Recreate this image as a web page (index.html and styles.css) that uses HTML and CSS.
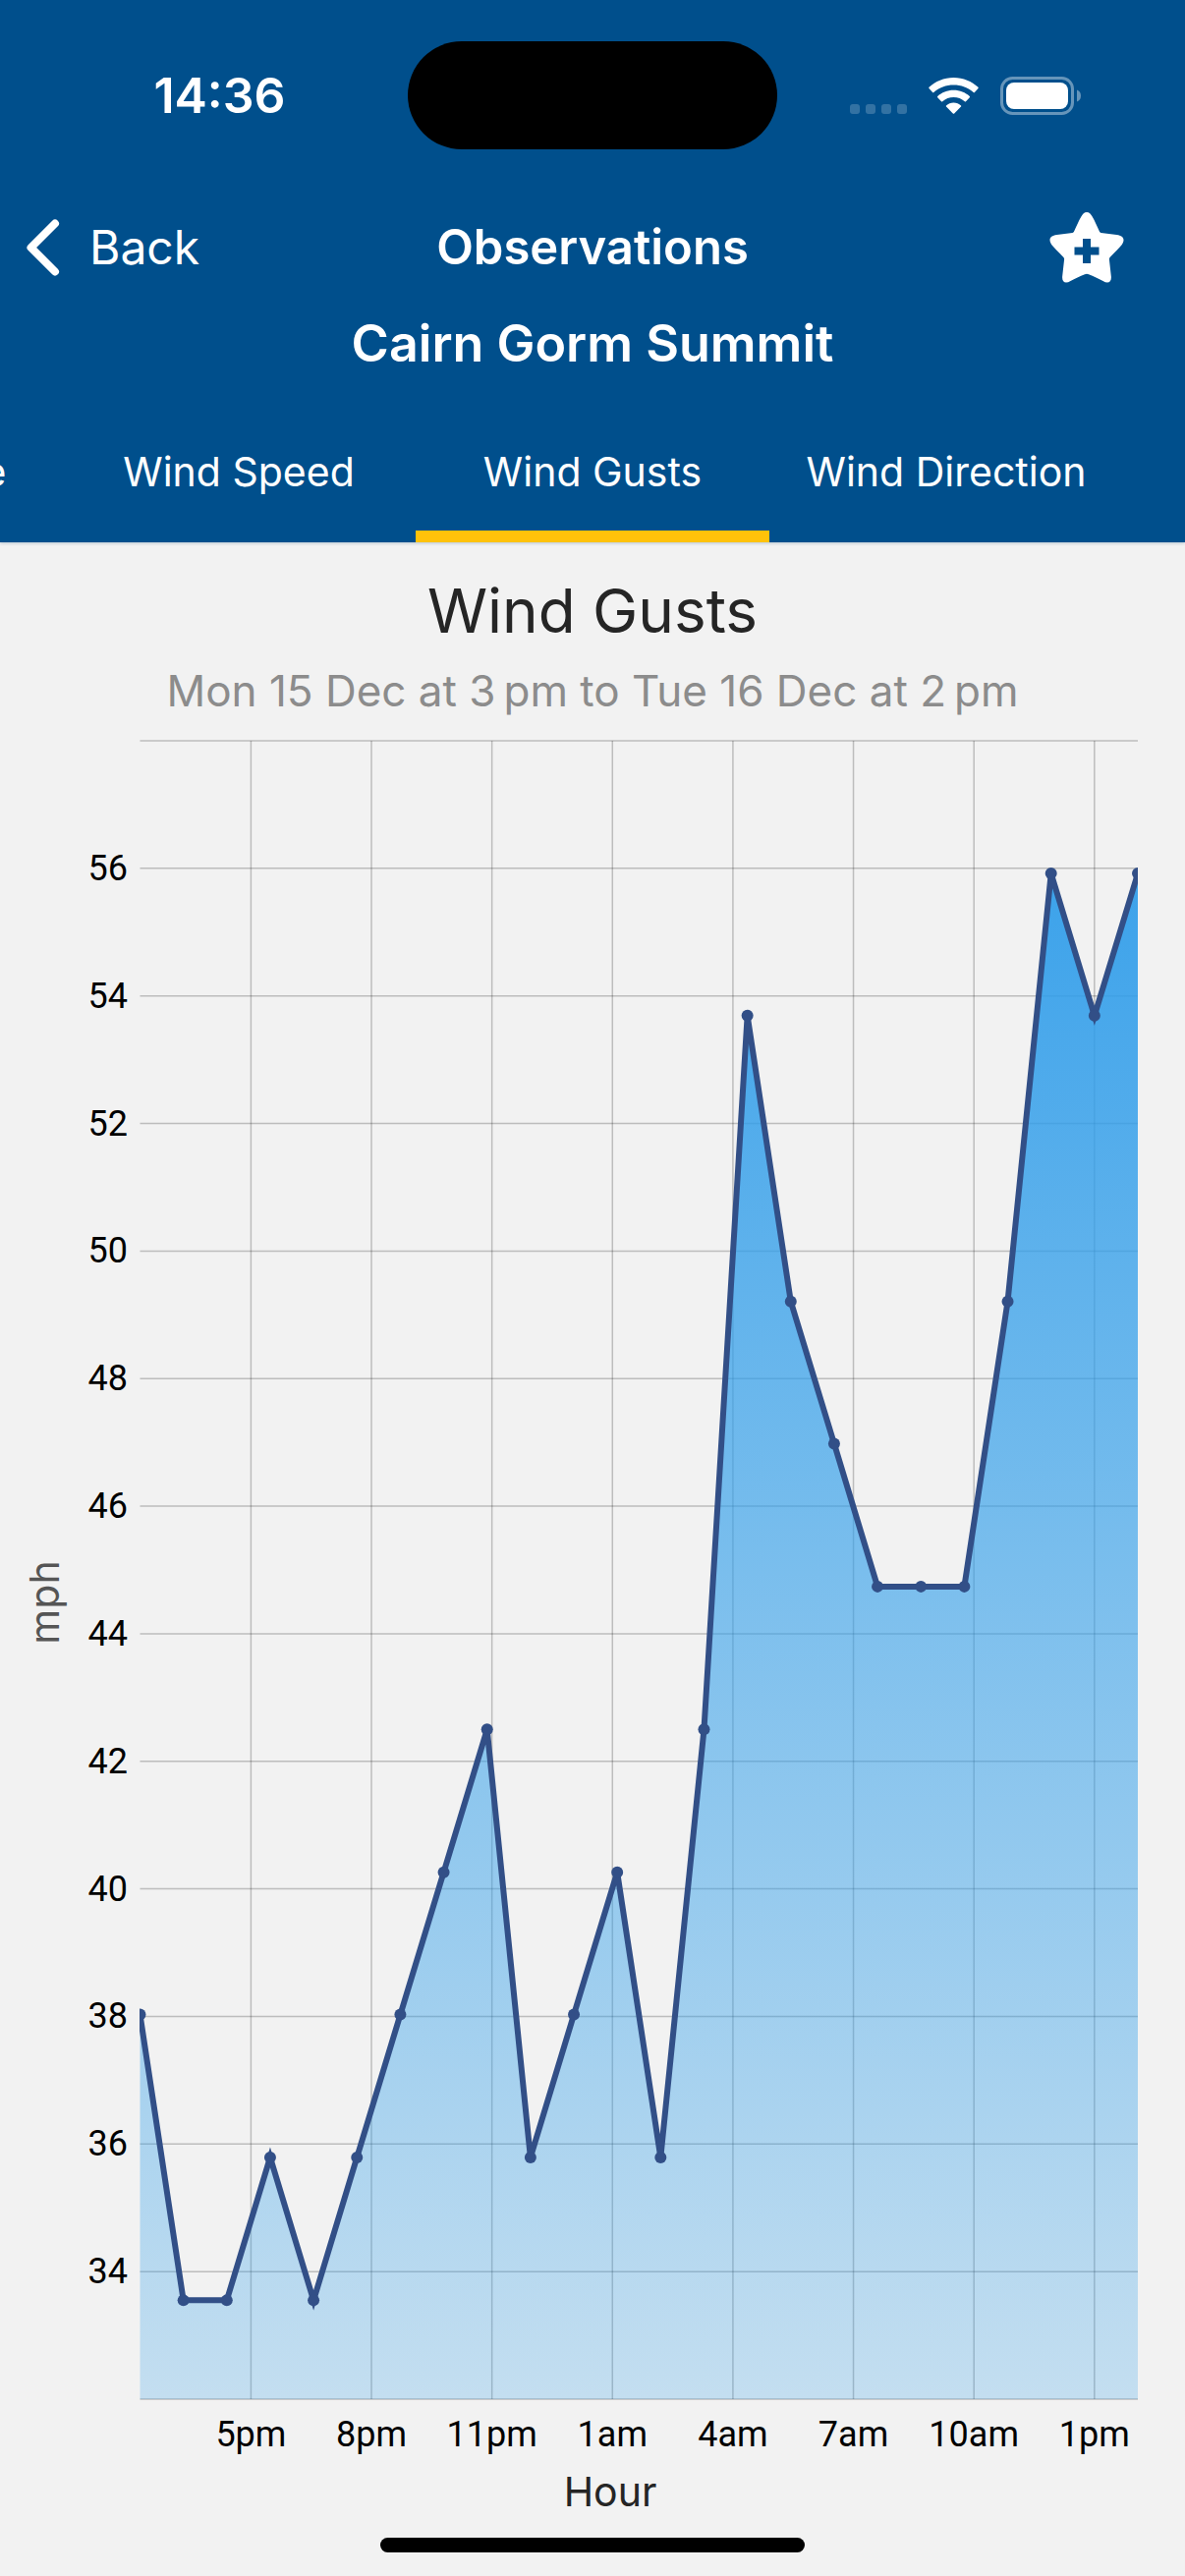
FILE: index.html
```html
<!DOCTYPE html>
<html lang="en">
<head>
<meta charset="utf-8">
<meta name="viewport" content="width=device-width, initial-scale=1">
<title>Observations – Cairn Gorm Summit</title>
<link rel="stylesheet" href="styles.css">
</head>
<body>
<header class="header">
  <div class="status">
    <div class="time">14:36</div>
    <div class="island"></div>
    <div class="indicators">
      <svg class="signal" width="58" height="10" viewBox="0 0 58 10" aria-hidden="true">
        <rect x="0" width="10" height="10" rx="3"/><rect x="16" width="10" height="10" rx="3"/><rect x="32" width="10" height="10" rx="3"/><rect x="48" width="10" height="10" rx="3"/>
      </svg>
      <svg class="wifi" width="51" height="37" viewBox="0 0 51 37" aria-hidden="true">
        <path d="M25.500 0C35.300 0 44 3.800 50.500 9.800Q51 10.300 50.500 10.900L46.900 14.900Q46.300 15.500 45.700 15C40.200 10.200 33.200 7.600 25.500 7.600S10.800 10.200 5.300 15Q4.700 15.500 4.100 14.900L.5 10.900Q0 10.300.5 9.800C7 3.800 15.700 0 25.500 0Z"/>
        <path d="M25.500 12.800C31.900 12.800 37.600 15.200 41.800 19Q42.300 19.600 41.800 20.200L38 24.300Q37.400 24.800 36.800 24.300C33.700 21.600 29.800 20.100 25.500 20.100S17.300 21.600 14.200 24.300Q13.600 24.800 13 24.300L9.200 20.200Q8.700 19.600 9.200 19C13.400 15.200 19.100 12.800 25.500 12.800Z"/>
        <path d="M25.500 25.600C28.400 25.600 31 26.700 33 28.400Q33.500 28.900 33 29.500L26.200 36.500Q25.500 37.200 24.800 36.500L18 29.500Q17.500 28.900 18 28.400C20 26.700 22.600 25.600 25.500 25.600Z"/>
      </svg>
      <svg class="battery" width="83" height="39" viewBox="0 0 83 39" aria-hidden="true">
        <rect class="shell" x="1.500" y="1.500" width="72" height="36" rx="11"/>
        <path class="nub" d="M78 13.500Q82 15 82 19.500T78 25.500Z"/>
        <rect x="6" y="6" width="63" height="27" rx="8"/>
      </svg>
    </div>
  </div>
  <div class="nav">
    <button class="back" type="button">
      <svg width="34" height="58" viewBox="0 0 34 58" aria-hidden="true"><path d="M29 4.500L4.500 29L29 53.500"/></svg>
      Back
    </button>
    <h1 class="heading">Observations</h1>
    <button class="favourite" type="button" aria-label="Add to favourites">
      <svg width="76" height="72" viewBox="0 0 76 72" aria-hidden="true">
        <path class="star" d="M38 0C40.500 0 42.300 2 43.500 4.300C46.500 9.500 48.500 14.500 51 19.800Q51.500 20.800 52.500 21L68.500 23C73 23.600 75.500 25.500 75.500 28.200C75.500 30.300 74.500 32.200 72.500 34.500C69 38.500 65 42.500 61.500 46Q60.800 47 60.900 48L62.800 65C63.300 69.500 61.500 71.500 59 71.500Q57 71.500 54.500 70C50 67.300 45 65.200 40 63.200Q38 62.400 36 63.200C31 65.200 26 67.300 21.500 70Q19 71.500 17 71.500C14.500 71.500 12.700 69.500 13.200 65L15.100 48Q15.200 47 14.500 46C11 42.500 7 38.500 3.500 34.500C1.500 32.200.5 30.300.5 28.200C.5 25.500 3 23.600 7.500 23L23.500 21Q24.500 20.800 25 19.800C27.500 14.500 29.500 9.500 32.500 4.300C33.700 2 35.500 0 38 0Z"/>
        <path class="plus" d="M34 27h8v8.500h8.500v8H42v8.500h-8v-8.500h-8.500v-8H34z"/>
      </svg>
    </button>
  </div>
  <h2 class="station">Cairn Gorm Summit</h2>
  <nav class="tabs">
    <a class="tab" href="#temperature">Temperature</a>
    <a class="tab" href="#wind-speed">Wind Speed</a>
    <a class="tab active" href="#wind-gusts" aria-current="page">Wind Gusts</a>
    <a class="tab" href="#wind-direction">Wind Direction</a>
  </nav>
</header>
<main class="content">
  <h3 class="title">Wind Gusts</h3>
  <p class="period">Mon 15 Dec at 3&#8201;pm to Tue 16 Dec at 2&#8201;pm</p>
  <svg class="chart" id="chart" viewBox="0 0 1206 1810" role="img" aria-label="Wind gusts in mph by hour">
    <defs>
      <linearGradient id="fill" gradientUnits="userSpaceOnUse" x1="0" y1="12" x2="0" y2="1700">
        <stop class="fill-top" offset="0"/>
        <stop class="fill-bottom" offset="1"/>
      </linearGradient>
      <clipPath id="plot"><rect x="142" y="0" width="1016" height="1700"/></clipPath>
    </defs>
    <g class="grid" id="grid"></g>
    <g clip-path="url(#plot)" id="series"></g>
    <g class="ticks" id="ticks"></g>
    <text class="axis-title y-title" transform="translate(60 889) rotate(-90)">mph</text>
    <text class="axis-title" x="621" y="1809">Hour</text>
  </svg>
  <div class="home"></div>
</main>
<script src="chart.js"></script>
</body>
</html>
```
FILE: styles.css
```css
* { box-sizing: border-box; }
body {
  margin: 0;
  background: #f2f2f2;
  color: #252525;
  font-family: Inter, "Liberation Sans", sans-serif;
}
h1, h2, h3, p { margin: 0; }
button {
  border: 0;
  padding: 0;
  background: none;
  color: inherit;
  font: inherit;
  cursor: pointer;
}
svg { display: block; flex: none; }

.header {
  background: #004f8c;
  color: #fff;
  box-shadow: 0 1px 3px rgba(0, 60, 110, .25);
}
.status {
  display: grid;
  grid-template-columns: 1fr 376px 1fr;
  align-items: center;
  height: 194px;
}
.time {
  padding-left: 32px;
  text-align: center;
  font-size: 50px;
  font-weight: 600;
  line-height: 60px;
}
.island {
  height: 110px;
  border-radius: 55px;
  background: #000;
}
.indicators {
  display: flex;
  align-items: center;
  gap: 22px;
  padding-left: 74px;
}
.indicators svg { fill: #fff; }
.indicators .signal {
  margin-top: 28px;
  opacity: .2;
}
.indicators .shell {
  fill: none;
  stroke: #fff;
  stroke-width: 3;
  opacity: .4;
}
.indicators .nub { opacity: .4; }

.nav {
  display: grid;
  grid-template-columns: 1fr auto 1fr;
  align-items: center;
  height: 116px;
  line-height: 60px;
}
.back {
  display: flex;
  align-items: center;
  gap: 30px;
  padding-left: 27px;
  font-size: 48px;
}
.back path {
  fill: none;
  stroke: #fff;
  stroke-width: 8;
  stroke-linecap: round;
  stroke-linejoin: round;
}
.heading, .station {
  font-weight: 600;
  line-height: 60px;
  text-align: center;
}
.heading { font-size: 49px; }
.favourite {
  justify-self: end;
  padding-right: 62px;
}
.star { fill: #fff; }
.plus { fill: #004f8c; }
.station {
  padding-top: 10px;
  font-size: 52px;
}

.tabs {
  display: flex;
  justify-content: center;
  height: 172px;
  overflow: hidden;
}
.tabs::after {
  content: "";
  flex: 0 0 360px;
}
.tab {
  flex: 0 0 360px;
  padding-top: 74px;
  border-bottom: 12px solid transparent;
  color: #fff;
  font-size: 41px;
  line-height: 52px;
  text-align: center;
  text-decoration: none;
  white-space: nowrap;
}
.tab.active { border-color: #ffc20a; }

.content {
  display: flex;
  flex-direction: column;
  align-items: center;
}
.title {
  padding-top: 32px;
  font-size: 62px;
  font-weight: 400;
  line-height: 76px;
}
.period {
  padding-top: 16px;
  color: #8c8c8c;
  font-size: 44px;
  line-height: 54px;
}
.chart {
  width: 100%;
  margin-top: 12px;
  overflow: visible;
}
.grid line {
  stroke: #000;
  stroke-opacity: .22;
  stroke-width: 1.5px;
}
.fill-top { stop-color: #309dea; stop-opacity: 1; }
.fill-bottom { stop-color: #309fea; stop-opacity: .24; }
.area { fill: url(#fill); }
.line {
  fill: none;
  stroke: #324f87;
  stroke-width: 6;
  stroke-linejoin: miter;
}
.dot { fill: #324f87; }
.ticks {
  fill: #000;
  font-family: Roboto, "Liberation Sans", sans-serif;
  font-size: 36px;
}
.ticks .x { text-anchor: middle; }
.ticks .y { text-anchor: end; }
.axis-title {
  fill: #252525;
  font-size: 41px;
  text-anchor: middle;
}
.y-title { fill: #555; }
.home {
  width: 432px;
  height: 15px;
  margin: 31px 0 24px;
  border-radius: 8px;
  background: #000;
}
```
FILE: chart.js
```js
const NS = 'http://www.w3.org/2000/svg';
const gusts = [38.03, 33.55, 33.55, 35.79, 33.55, 35.79, 38.03, 40.26, 42.5, 35.79, 38.03, 40.26,
  35.79, 42.5, 53.69, 49.21, 46.98, 44.74, 44.74, 44.74, 49.21, 55.92, 53.69, 55.92];
const hours = ['5pm', '8pm', '11pm', '1am', '4am', '7am', '10am', '1pm'];
const left = 142.5, right = 1158, top_ = 12, bottom = 1700, min = 32, max = 58;

const xAt = i => left + i * (right - left) / (gusts.length - 1);
const yAt = v => bottom - (v - min) * (bottom - top_) / (max - min);

function add(parent, name, attrs, text) {
  const el = document.createElementNS(NS, name);
  for (const key in attrs) el.setAttribute(key, attrs[key]);
  if (text) el.textContent = text;
  document.getElementById(parent).appendChild(el);
}

for (let v = min; v <= max; v += 2) {
  add('grid', 'line', { x1: left, x2: right, y1: yAt(v), y2: yAt(v) });
  if (v > min && v < max) add('ticks', 'text', { class: 'y', x: 130, y: yAt(v) + 12 }, String(v));
}
hours.forEach((hour, i) => {
  const x = 255.4 + i * 122.63;
  add('grid', 'line', { x1: x, x2: x, y1: top_, y2: bottom });
  add('ticks', 'text', { class: 'x', x: x, y: 1748 }, hour);
});

const points = gusts.map((v, i) => xAt(i) + ' ' + yAt(v)).join(' L');
add('series', 'path', { class: 'area', d: 'M' + left + ' ' + bottom + ' L' + points + ' L' + right + ' ' + bottom + ' Z' });
add('series', 'path', { class: 'line', d: 'M' + points });
gusts.forEach((v, i) => add('series', 'circle', { class: 'dot', cx: xAt(i), cy: yAt(v), r: 6 }));
```
